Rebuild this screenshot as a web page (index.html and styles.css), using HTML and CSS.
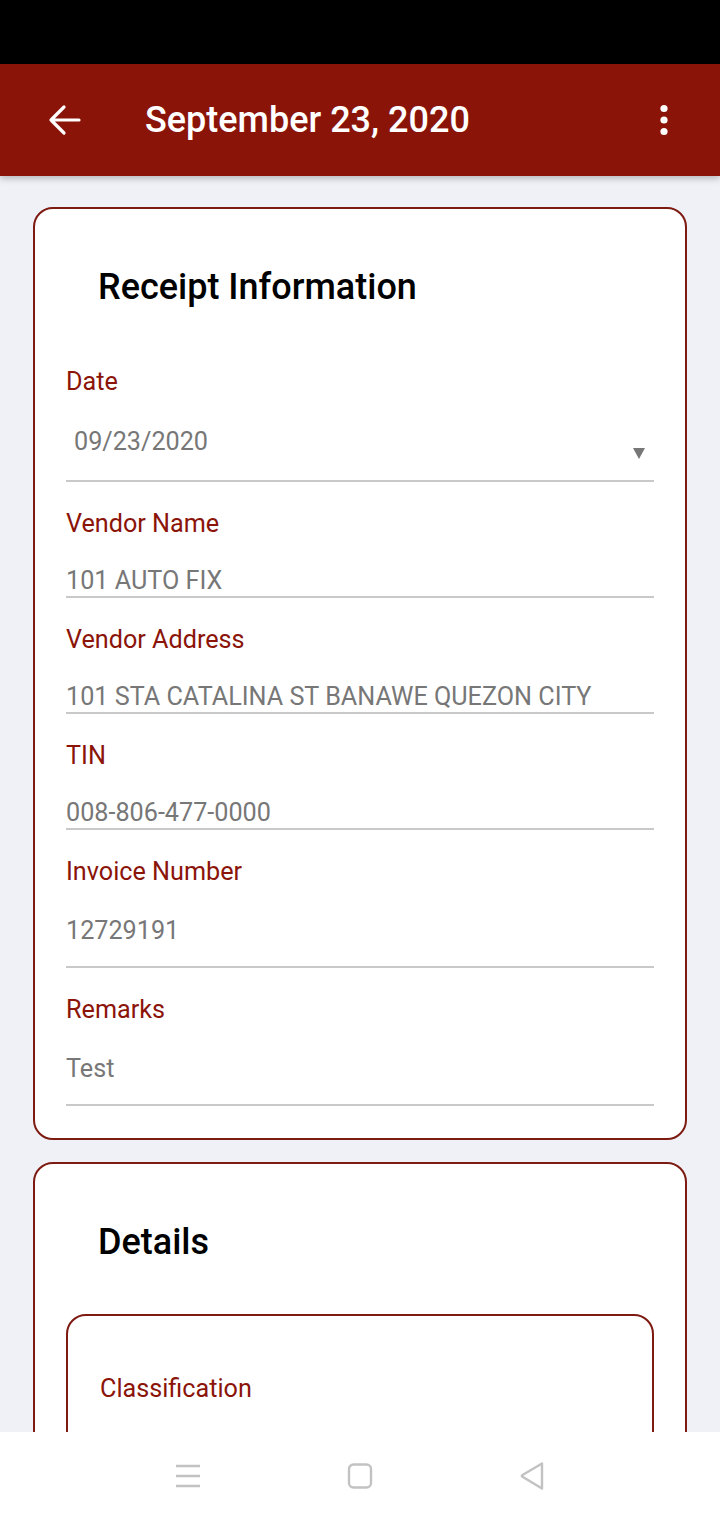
FILE: index.html
```html
<!DOCTYPE html>
<html>
<head>
<meta charset="utf-8">
<link rel="stylesheet" href="styles.css">
</head>
<body>
<div class="screen">
  <div class="statusbar"></div>
  <header class="appbar">
    <svg class="back" width="40" height="40" viewBox="0 0 40 40"><path d="M7 20H35M20 7L7 20L20 33" fill="none" stroke="#fff" stroke-width="3.2" stroke-linecap="round" stroke-linejoin="round"/></svg>
    <h1 class="apptitle">September 23, 2020</h1>
    <svg class="kebab" width="12" height="36" viewBox="0 0 12 36"><circle cx="6" cy="6.5" r="3.6" fill="#fff"/><circle cx="6" cy="18" r="3.6" fill="#fff"/><circle cx="6" cy="29.5" r="3.6" fill="#fff"/></svg>
  </header>
  <main class="content">
    <section class="card">
      <h2 class="card-title">Receipt Information</h2>
      <div class="fields">
        <div class="field">
          <div class="label">Date</div>
          <div class="input input--date"><span class="value">09/23/2020</span><span class="caret"></span></div>
        </div>
        <div class="field">
          <div class="label">Vendor Name</div>
          <div class="input input--compact"><span class="value">101 AUTO FIX</span></div>
        </div>
        <div class="field">
          <div class="label">Vendor Address</div>
          <div class="input input--compact"><span class="value">101 STA CATALINA ST BANAWE QUEZON CITY</span></div>
        </div>
        <div class="field">
          <div class="label">TIN</div>
          <div class="input input--compact"><span class="value">008-806-477-0000</span></div>
        </div>
        <div class="field">
          <div class="label">Invoice Number</div>
          <div class="input input--tall"><span class="value">12729191</span></div>
        </div>
        <div class="field">
          <div class="label">Remarks</div>
          <div class="input input--tall"><span class="value">Test</span></div>
        </div>
      </div>
    </section>
    <section class="card card--details">
      <h2 class="card-title">Details</h2>
      <div class="inner-card">
        <div class="label">Classification</div>
      </div>
    </section>
  </main>
  <nav class="navbar">
    <svg width="28" height="28" viewBox="0 0 28 28"><path d="M2 4H26M2 14H26M2 24H26" stroke="#c2c2c2" stroke-width="2.4" fill="none"/></svg>
    <svg width="28" height="28" viewBox="0 0 28 28"><rect x="3" y="2.5" width="22" height="23" rx="4.5" stroke="#c2c2c2" stroke-width="2.4" fill="none"/></svg>
    <svg width="28" height="30" viewBox="0 0 28 30"><path d="M24 2.5V27.5L4.5 15.8Q3 15 4.5 14Z" stroke="#c2c2c2" stroke-width="2.4" fill="none" stroke-linejoin="round"/></svg>
  </nav>
</div>
</body>
</html>
```

FILE: styles.css
```css
* { box-sizing: border-box; margin: 0; padding: 0; }
html, body { width: 720px; height: 1520px; overflow: hidden; }
body { font-family: Roboto, "Liberation Sans", sans-serif; background: #f0f1f6; }

.screen { display: flex; flex-direction: column; height: 1520px; }
.statusbar { height: 64px; background: #000; flex: none; }

.appbar {
  height: 112px; flex: none; background: #8b1409;
  display: flex; align-items: center;
  padding: 0 0 0 44px;
  box-shadow: 0 3px 6px rgba(0,0,0,0.22);
  position: relative; z-index: 2;
}
.back { flex: none; }
.apptitle {
  color: #fff; font-size: 36px; font-weight: 500;
  margin-left: 61px; flex: 1; letter-spacing: 0;
}
.kebab { flex: none; margin-right: 50px; }

.content { flex: 1; overflow: hidden; padding: 31px 33px 0; display: flex; flex-direction: column; gap: 22px; }

.card {
  background: #fff; border: 2px solid #7d1a12; border-radius: 20px;
  padding: 58px 31px 32px;
  flex: none;
}
.card-title {
  font-size: 36px; font-weight: 500; color: #000;
  line-height: 40px; padding-left: 32px;
}
.fields { display: flex; flex-direction: column; gap: 28px; margin-top: 61px; }
.label { color: #8b1409; font-size: 25.2px; line-height: 28px; }
.input { border-bottom: 2px solid #c9c9c9; display: flex; }
.value { color: #777; font-size: 25.2px; line-height: 28px; white-space: nowrap; }
.input--date { height: 86px; padding: 32px 9px 0 8px; justify-content: space-between; }
.input--compact { height: 60px; padding-top: 29px; }
.input--tall { height: 82px; padding-top: 31px; }
.caret {
  width: 0; height: 0; margin-top: 20px;
  border-left: 6px solid transparent; border-right: 6px solid transparent;
  border-top: 11px solid #777;
}

.card--details { padding-bottom: 0; }
.inner-card {
  margin-top: 52px; border: 2px solid #7d1a12; border-radius: 20px;
  padding: 59px 32px 0; height: 400px;
}

.navbar {
  height: 88px; flex: none; background: #fff;
  display: flex; align-items: center; justify-content: center; gap: 144px;
  padding-left: 0;
  position: relative; z-index: 2;
}
```
